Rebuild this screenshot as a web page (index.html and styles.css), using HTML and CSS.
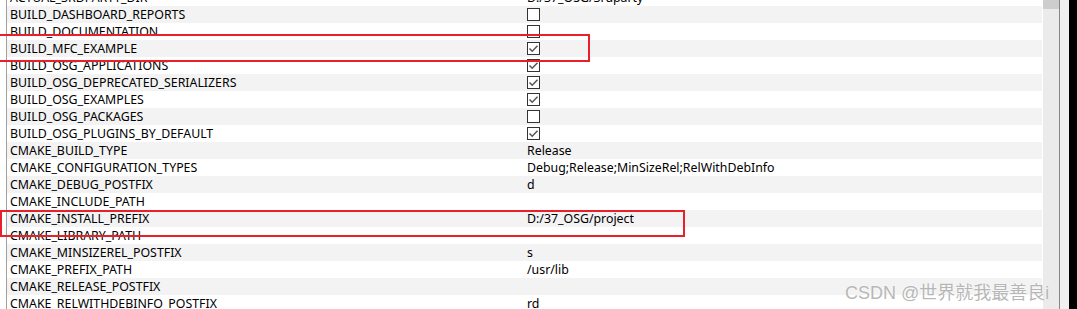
FILE: index.html
```html
<!DOCTYPE html>
<html>
<head>
<meta charset="utf-8">
<link rel="stylesheet" href="styles.css">
</head>
<body>
<div class="window">
  <div class="view">
    <div class="table">
      <div class="row"><span class="name">ACTUAL_3RDPARTY_DIR</span><span class="value">D:/37_OSG/3rdparty</span></div>
      <div class="row alt"><span class="name">BUILD_DASHBOARD_REPORTS</span><span class="value"><span class="cb"></span></span></div>
      <div class="row"><span class="name">BUILD_DOCUMENTATION</span><span class="value"><span class="cb"></span></span></div>
      <div class="row alt"><span class="name">BUILD_MFC_EXAMPLE</span><span class="value"><span class="cb on"><svg viewBox="0 0 13 13"><polyline points="2.5,6.5 5.2,9.2 10.5,3.8"/></svg></span></span></div>
      <div class="row"><span class="name">BUILD_OSG_APPLICATIONS</span><span class="value"><span class="cb on"><svg viewBox="0 0 13 13"><polyline points="2.5,6.5 5.2,9.2 10.5,3.8"/></svg></span></span></div>
      <div class="row alt"><span class="name">BUILD_OSG_DEPRECATED_SERIALIZERS</span><span class="value"><span class="cb on"><svg viewBox="0 0 13 13"><polyline points="2.5,6.5 5.2,9.2 10.5,3.8"/></svg></span></span></div>
      <div class="row"><span class="name">BUILD_OSG_EXAMPLES</span><span class="value"><span class="cb on"><svg viewBox="0 0 13 13"><polyline points="2.5,6.5 5.2,9.2 10.5,3.8"/></svg></span></span></div>
      <div class="row alt"><span class="name">BUILD_OSG_PACKAGES</span><span class="value"><span class="cb"></span></span></div>
      <div class="row"><span class="name">BUILD_OSG_PLUGINS_BY_DEFAULT</span><span class="value"><span class="cb on"><svg viewBox="0 0 13 13"><polyline points="2.5,6.5 5.2,9.2 10.5,3.8"/></svg></span></span></div>
      <div class="row alt"><span class="name">CMAKE_BUILD_TYPE</span><span class="value">Release</span></div>
      <div class="row"><span class="name">CMAKE_CONFIGURATION_TYPES</span><span class="value">Debug;Release;MinSizeRel;RelWithDebInfo</span></div>
      <div class="row alt"><span class="name">CMAKE_DEBUG_POSTFIX</span><span class="value">d</span></div>
      <div class="row"><span class="name">CMAKE_INCLUDE_PATH</span><span class="value"></span></div>
      <div class="row alt"><span class="name">CMAKE_INSTALL_PREFIX</span><span class="value">D:/37_OSG/project</span></div>
      <div class="row"><span class="name">CMAKE_LIBRARY_PATH</span><span class="value"></span></div>
      <div class="row alt"><span class="name">CMAKE_MINSIZEREL_POSTFIX</span><span class="value">s</span></div>
      <div class="row"><span class="name">CMAKE_PREFIX_PATH</span><span class="value">/usr/lib</span></div>
      <div class="row alt"><span class="name">CMAKE_RELEASE_POSTFIX</span><span class="value"></span></div>
      <div class="row"><span class="name">CMAKE_RELWITHDEBINFO_POSTFIX</span><span class="value">rd</span></div>
    </div>
    <div class="scrollbar">
      <div class="track"><div class="thumb"></div></div>
      <div class="edge"></div>
    </div>
  </div>
  <div class="mark mark-1"></div>
  <div class="mark mark-2"></div>
  <div class="watermark">CSDN @世界就我最善良i</div>
</div>
</body>
</html>
```

FILE: styles.css
```css
html, body {
  margin: 0;
  padding: 0;
  background: #000000;
  overflow: hidden;
}
.window {
  position: relative;
  width: 1069px;
  height: 309px;
  overflow: hidden;
  background: #ffffff;
  font-family: "Noto Sans", "Noto Sans CJK SC", sans-serif;
  font-size: 12.35px;
  color: #000;
}
.view {
  display: flex;
  height: 309px;
  padding-left: 6px;
}
.table {
  flex: 1 1 0;
  min-width: 0;
  border-left: 1px solid #a0a0a0;
  margin-top: -11px;
  margin-right: 1px;
}
.row {
  display: grid;
  grid-template-columns: 517px 1fr;
  height: 17px;
  line-height: 17px;
  white-space: nowrap;
}
.row.alt {
  background: #f3f3f3;
}
.name {
  padding-left: 3px;
}
.value {
  padding-left: 3px;
  display: flex;
  align-items: center;
}
.cb {
  width: 11px;
  height: 11px;
  border: 1px solid #333;
  background: #fff;
  display: block;
}
.cb svg {
  display: block;
  width: 13px;
  height: 13px;
  margin: -1px 0 0 -1px;
}
.cb polyline {
  fill: none;
  stroke: #555;
  stroke-width: 1.5;
}
.scrollbar {
  display: flex;
  width: 26px;
  flex: none;
}
.track {
  width: 16px;
  flex: none;
  background: #ebebeb;
}
.thumb {
  height: 9px;
  background: #cdcdcd;
}
.edge {
  width: 9px;
  flex: none;
  border-left: 1px solid #888;
  background: #f0f0f0;
}
.mark {
  position: absolute;
  border: 2px solid #e8202a;
  box-sizing: border-box;
}
.mark-1 {
  left: -4px;
  top: 34px;
  width: 594px;
  height: 28px;
}
.mark-2 {
  left: 0;
  top: 210px;
  width: 685px;
  height: 27px;
}
.watermark {
  position: absolute;
  left: 845px;
  top: 278px;
  font-size: 18px;
  color: rgba(160, 160, 160, 0.75);
  text-shadow: 0 0 2px #fff;
  font-family: "Liberation Sans", "Noto Sans CJK SC", sans-serif;
  white-space: nowrap;
}
```
